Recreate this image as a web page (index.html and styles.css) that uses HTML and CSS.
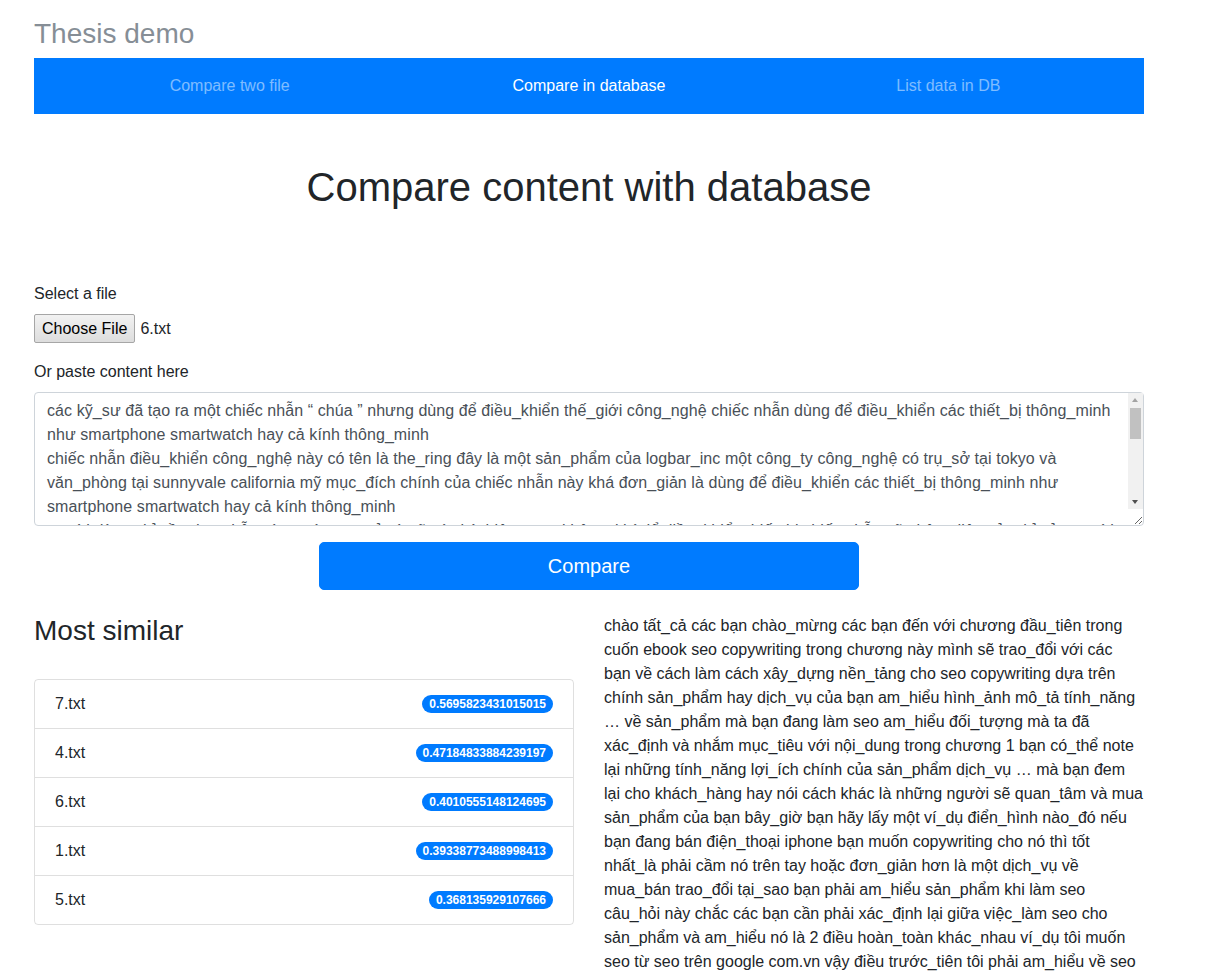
FILE: index.html
```html
<!DOCTYPE html>
<html lang="vi">
<head>
<meta charset="utf-8">
<title>Thesis demo</title>
<link rel="stylesheet" href="styles.css">
</head>
<body>
<div class="page">
  <h3 class="brand">Thesis demo</h3>
  <nav class="topnav">
    <a class="nav-link" href="#">Compare two file</a>
    <a class="nav-link active" href="#">Compare in database</a>
    <a class="nav-link" href="#">List data in DB</a>
  </nav>

  <h1 class="page-title">Compare content with database</h1>

  <form class="compare-form">
    <div class="form-group">
      <label class="form-label">Select a file</label>
      <div class="file-input">
        <button type="button" class="file-btn">Choose File</button>
        <span class="file-name">6.txt</span>
      </div>
    </div>
    <div class="form-group">
      <label class="form-label">Or paste content here</label>
      <div class="textarea-wrap">
        <textarea class="form-control" rows="5">các kỹ_sư đã tạo ra một chiếc nhẫn “ chúa ” nhưng dùng để điều_khiển thế_giới công_nghệ chiếc nhẫn dùng để điều_khiển các thiết_bị thông_minh như smartphone smartwatch hay cả kính thông_minh
chiếc nhẫn điều_khiển công_nghệ này có tên là the_ring đây là một sản_phẩm của logbar_inc một công_ty công_nghệ có trụ_sở tại tokyo và văn_phòng tại sunnyvale california mỹ mục_đích chính của chiếc nhẫn này khá đơn_giản là dùng để điều_khiển các thiết_bị thông_minh như smartphone smartwatch hay cả kính thông_minh
người dùng chỉ cần đeo nhẫn vào ngón_tay trỏ và vẽ các ký_hiệu trong không_khí để điều_khiển thiết_bị chiếc nhẫn sẽ nhận_diện cử_chỉ của người dùng và gửi lệnh đến thiết_bị thông_qua kết_nối bluetooth
the_ring được trang_bị cảm_biến chuyển_động đèn led và bộ rung nhỏ để thông_báo cho người dùng khi có tin_nhắn hay cuộc gọi đến
ngoài_ra người dùng còn có_thể dùng chiếc nhẫn để gửi tin_nhắn ngắn điều_khiển nhạc bật tắt đèn trong nhà và nhiều tính_năng khác</textarea>
        <div class="fake-scrollbar" aria-hidden="true">
          <span class="sb-btn sb-up"></span>
          <span class="sb-track"><span class="sb-thumb"></span></span>
          <span class="sb-btn sb-down"></span>
        </div>
      </div>
    </div>
    <div class="submit-row">
      <button type="button" class="btn-compare">Compare</button>
    </div>
  </form>

  <div class="results">
    <div class="col">
      <h3 class="section-title">Most similar</h3>
      <ul class="list-group">
        <li class="list-item"><span>7.txt</span><span class="badge">0.5695823431015015</span></li>
        <li class="list-item"><span>4.txt</span><span class="badge">0.47184833884239197</span></li>
        <li class="list-item"><span>6.txt</span><span class="badge">0.4010555148124695</span></li>
        <li class="list-item"><span>1.txt</span><span class="badge">0.39338773488998413</span></li>
        <li class="list-item"><span>5.txt</span><span class="badge">0.368135929107666</span></li>
      </ul>
    </div>
    <div class="col">
      <p class="doc-text">chào tất_cả các bạn chào_mừng các bạn đến với chương đầu_tiên trong<br>
cuốn ebook seo copywriting trong chương này mình sẽ trao_đổi với các<br>
bạn về cách làm cách xây_dựng nền_tảng cho seo copywriting dựa trên<br>
chính sản_phẩm hay dịch_vụ của bạn am_hiểu hình_ảnh mô_tả tính_năng<br>
… về sản_phẩm mà bạn đang làm seo am_hiểu đối_tượng mà ta đã<br>
xác_định và nhắm mục_tiêu với nội_dung trong chương 1 bạn có_thể note<br>
lại những tính_năng lợi_ích chính của sản_phẩm dịch_vụ … mà bạn đem<br>
lại cho khách_hàng hay nói cách khác là những người sẽ quan_tâm và mua<br>
sản_phẩm của bạn bây_giờ bạn hãy lấy một ví_dụ điển_hình nào_đó nếu<br>
bạn đang bán điện_thoại iphone bạn muốn copywriting cho nó thì tốt<br>
nhất_là phải cầm nó trên tay hoặc đơn_giản hơn là một dịch_vụ về<br>
mua_bán trao_đổi tại_sao bạn phải am_hiểu sản_phẩm khi làm seo<br>
câu_hỏi này chắc các bạn cần phải xác_định lại giữa việc_làm seo cho<br>
sản_phẩm và am_hiểu nó là 2 điều hoàn_toàn khác_nhau ví_dụ tôi muốn<br>
seo từ seo trên google com.vn vậy điều trước_tiên tôi phải am_hiểu về seo<br>
và các công_cụ tìm_kiếm sau đó mới có_thể viết được nội_dung chuẩn seo cho sản_phẩm của mình</p>
    </div>
  </div>
</div>
</body>
</html>
```

FILE: styles.css
```css
* {
  box-sizing: border-box;
}

html, body {
  margin: 0;
  padding: 0;
  background: #fff;
}

body {
  font-family: "Liberation Sans", Arial, sans-serif;
  font-size: 16px;
  line-height: 1.5;
  color: #212529;
}

.page {
  width: 1110px;
  margin-left: 34px;
  padding-top: 17px;
}

.brand {
  margin: 0 0 7px;
  font-size: 28px;
  font-weight: 400;
  line-height: 1.2;
  color: #868e96;
}

.topnav {
  display: grid;
  grid-template-columns: 1fr 1fr 1fr;
  align-items: center;
  height: 56px;
  padding: 0 16px;
  background: #007bff;
}

.nav-link {
  display: block;
  padding: 8px 16px;
  text-align: center;
  color: rgba(255, 255, 255, 0.5);
  text-decoration: none;
  font-size: 16px;
  line-height: 24px;
}

.nav-link.active {
  color: #fff;
}

.page-title {
  margin: 49px 0 71px;
  font-size: 40px;
  font-weight: 400;
  line-height: 1.2;
  text-align: center;
}

.form-group {
  margin-bottom: 16px;
}

.form-label {
  display: block;
  margin-bottom: 8px;
}

.file-input {
  display: flex;
  align-items: center;
  gap: 5px;
  height: 30px;
}

.file-btn {
  font-family: "Liberation Sans", Arial, sans-serif;
  font-size: 16px;
  line-height: 19px;
  color: #000;
  padding: 4px 7px;
  border: 1px solid #a6a6a6;
  border-radius: 2px;
  background: linear-gradient(#f2f2f2, #dddddd);
}

.file-name {
  font-size: 16px;
}

.textarea-wrap {
  position: relative;
}

.form-control {
  display: block;
  width: 100%;
  height: 134px;
  padding: 6px 27px 6px 12px;
  font-family: "Liberation Sans", Arial, sans-serif;
  font-size: 16px;
  line-height: 24px;
  letter-spacing: 0.08px;
  color: #495057;
  background: #fff;
  border: 1px solid #ced4da;
  border-radius: 4px;
  resize: vertical;
  overflow: hidden;
}

.fake-scrollbar {
  position: absolute;
  top: 1px;
  right: 1px;
  width: 15px;
  height: 116px;
  display: flex;
  flex-direction: column;
  background: #f1f1f1;
  pointer-events: none;
}

.sb-btn {
  position: relative;
  display: block;
  height: 15px;
  flex: none;
}

.sb-btn::after {
  content: "";
  position: absolute;
  left: 4px;
  width: 0;
  height: 0;
  border-left: 3.5px solid transparent;
  border-right: 3.5px solid transparent;
}

.sb-up::after {
  top: 5px;
  border-bottom: 4px solid #a3a3a3;
}

.sb-down::after {
  top: 6px;
  border-top: 4px solid #505050;
}

.sb-track {
  flex: 1;
  display: block;
  padding: 0 2px;
}

.sb-thumb {
  display: block;
  height: 31px;
  background: #c1c1c1;
}

.submit-row {
  display: flex;
  justify-content: center;
}

.btn-compare {
  width: 540px;
  height: 48px;
  font-family: "Liberation Sans", Arial, sans-serif;
  font-size: 20px;
  line-height: 30px;
  color: #fff;
  background: #007bff;
  border: 1px solid #007bff;
  border-radius: 5px;
}

.results {
  display: grid;
  grid-template-columns: 540px 540px;
  column-gap: 30px;
  margin-top: 24px;
}

.section-title {
  margin: 0 0 32px;
  font-size: 28px;
  font-weight: 400;
  line-height: 1.2;
}

.list-group {
  list-style: none;
  margin: 0;
  padding: 0;
  border: 1px solid rgba(0, 0, 0, 0.125);
  border-radius: 4px;
}

.list-item {
  display: flex;
  justify-content: space-between;
  align-items: center;
  padding: 12px 20px;
  line-height: 24px;
}

.list-item + .list-item {
  border-top: 1px solid rgba(0, 0, 0, 0.125);
}

.badge {
  display: inline-block;
  padding: 3px 7px;
  font-size: 12px;
  font-weight: 700;
  line-height: 1;
  color: #fff;
  background: #007bff;
  border-radius: 160px;
}

.doc-text {
  margin: 0;
  line-height: 24px;
}
```
